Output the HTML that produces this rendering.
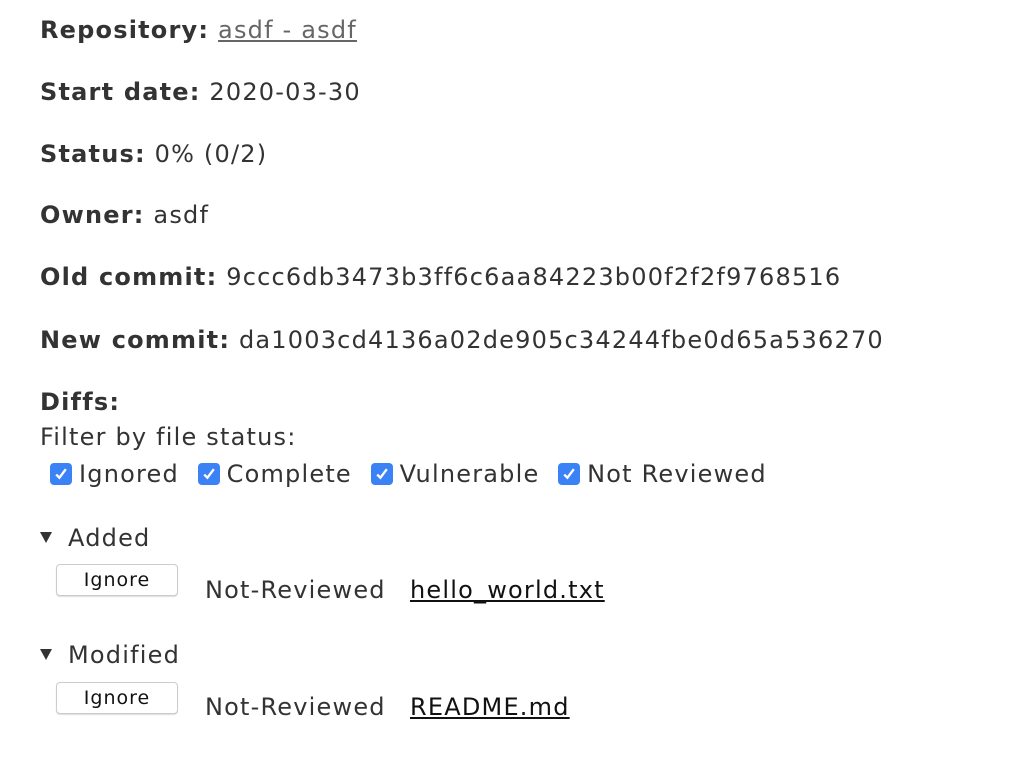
<!DOCTYPE html>
<html><head><style>
body{margin:0;background:#fff;font-family:"DejaVu Sans",Verdana,sans-serif;font-size:24px;color:#333;letter-spacing:1.2px;}
.l{position:absolute;left:40px;white-space:nowrap;line-height:28px;}
b{font-weight:bold;}
a{color:#666;text-decoration:underline;}
a.f{color:#111;}
.cb{display:inline-block;width:22px;height:22px;background:#3b82f6;border-radius:4px;vertical-align:-3px;position:relative;margin-right:7px;}
.cb svg{position:absolute;left:3px;top:3px;}
.g{display:inline-block;width:1px;}
.btn{position:absolute;left:56px;width:120px;height:30px;border:1px solid #ccc;border-radius:4px;background:#fff;font-size:19px;letter-spacing:1px;color:#111;text-align:center;line-height:30px;box-shadow:0 1px 1px #ddd;}
.tri{display:inline-block;width:0;height:0;border-left:6px solid transparent;border-right:6px solid transparent;border-top:11px solid #333;margin-right:16px;vertical-align:3px;}
</style></head><body>
<div class="l" style="top:16px"><b>Repository:</b> <a>asdf - asdf</a></div>
<div class="l" style="top:78px"><b>Start date:</b> 2020-03-30</div>
<div class="l" style="top:140px"><b>Status:</b> 0% (0/2)</div>
<div class="l" style="top:201px"><b>Owner:</b> asdf</div>
<div class="l" style="top:263px"><b>Old commit:</b> 9ccc6db3473b3ff6c6aa84223b00f2f2f9768516</div>
<div class="l" style="top:326px"><b>New commit:</b> da1003cd4136a02de905c34244fbe0d65a536270</div>
<div class="l" style="top:388px"><b>Diffs:</b></div>
<div class="l" style="top:423px">Filter by file status:</div>
<div class="l" style="top:460px;left:50px">
<span class="cb"><svg width="16" height="16" viewBox="0 0 15 15"><path d="M3 8l3 3 6-8" stroke="#fff" stroke-width="2.2" fill="none"/></svg></span>Ignored&nbsp;<span class="g"></span>
<span class="cb"><svg width="16" height="16" viewBox="0 0 15 15"><path d="M3 8l3 3 6-8" stroke="#fff" stroke-width="2.2" fill="none"/></svg></span>Complete&nbsp;<span class="g"></span>
<span class="cb"><svg width="16" height="16" viewBox="0 0 15 15"><path d="M3 8l3 3 6-8" stroke="#fff" stroke-width="2.2" fill="none"/></svg></span>Vulnerable&nbsp;<span class="g"></span>
<span class="cb"><svg width="16" height="16" viewBox="0 0 15 15"><path d="M3 8l3 3 6-8" stroke="#fff" stroke-width="2.2" fill="none"/></svg></span>Not Reviewed</div>
<div class="l" style="top:524px"><span class="tri"></span>Added</div>
<div class="btn" style="top:564px">Ignore</div>
<div class="l" style="top:576px;left:205px">Not-Reviewed</div>
<div class="l" style="top:576px;left:410px"><a class="f">hello_world.txt</a></div>
<div class="l" style="top:641px"><span class="tri"></span>Modified</div>
<div class="btn" style="top:682px">Ignore</div>
<div class="l" style="top:693px;left:205px">Not-Reviewed</div>
<div class="l" style="top:693px;left:410px"><a class="f">README.md</a></div>
</body></html>
